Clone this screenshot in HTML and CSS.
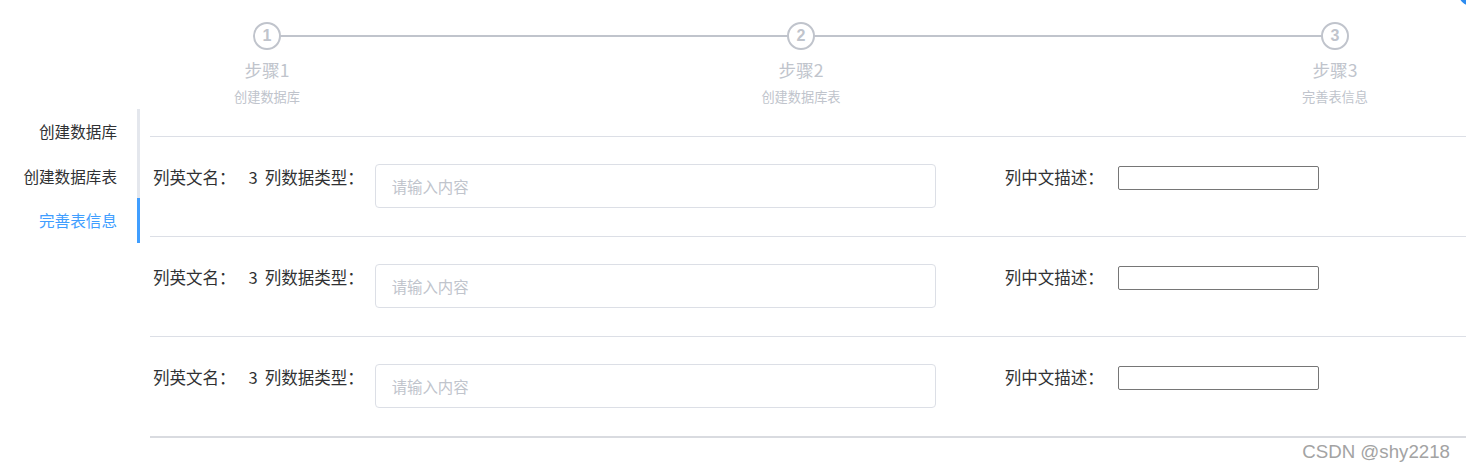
FILE: index.html
```html
<!DOCTYPE html>
<html lang="zh-CN">
<head>
<meta charset="utf-8">
<title>步骤</title>
<link rel="stylesheet" href="styles.css">
</head>
<body>
<div class="page">
  <div class="steps">
    <div class="step">
      <div class="step-head"><span class="step-line"></span><span class="step-icon">1</span></div>
      <div class="step-title">步骤1</div>
      <div class="step-desc">创建数据库</div>
    </div>
    <div class="step">
      <div class="step-head"><span class="step-line"></span><span class="step-icon">2</span></div>
      <div class="step-title">步骤2</div>
      <div class="step-desc">创建数据库表</div>
    </div>
    <div class="step">
      <div class="step-head"><span class="step-icon">3</span></div>
      <div class="step-title">步骤3</div>
      <div class="step-desc">完善表信息</div>
    </div>
  </div>

  <div class="main">
    <div class="tabs-nav">
      <div class="tab-item">创建数据库</div>
      <div class="tab-item">创建数据库表</div>
      <div class="tab-item active">完善表信息</div>
    </div>
    <div class="content">
      <div class="row">
        <span class="lbl">列英文名：</span><span class="val">3</span><span class="lbl">列数据类型：</span>
        <input class="el-input" type="text" placeholder="请输入内容">
        <span class="lbl lbl-desc">列中文描述：</span>
        <input class="native-input" type="text">
      </div>
      <div class="row">
        <span class="lbl">列英文名：</span><span class="val">3</span><span class="lbl">列数据类型：</span>
        <input class="el-input" type="text" placeholder="请输入内容">
        <span class="lbl lbl-desc">列中文描述：</span>
        <input class="native-input" type="text">
      </div>
      <div class="row last">
        <span class="lbl">列英文名：</span><span class="val">3</span><span class="lbl">列数据类型：</span>
        <input class="el-input" type="text" placeholder="请输入内容">
        <span class="lbl lbl-desc">列中文描述：</span>
        <input class="native-input" type="text">
      </div>
    </div>
  </div>

  <div class="watermark">CSDN @shy2218</div>
  <div class="fab"></div>
</div>
</body>
</html>
```
FILE: styles.css
```css
html, body {
  margin: 0;
  padding: 0;
  overflow: hidden;
  background: #fff;
}
body {
  font-family: "Noto Sans CJK SC", "Microsoft YaHei", sans-serif;
  width: 1466px;
  height: 471px;
}
.page {
  position: relative;
  width: 1466px;
  height: 471px;
  overflow: hidden;
}

/* steps */
.steps {
  display: flex;
  width: 1602px;
  padding-bottom: 5px;
}
.step {
  flex: 0 0 534px;
  text-align: center;
}
.step-head {
  position: relative;
  height: 28px;
  margin-top: 22px;
}
.step-line {
  position: absolute;
  top: 13px;
  left: 50%;
  right: -50%;
  height: 2px;
  background: #c0c4cc;
}
.step-icon {
  position: relative;
  z-index: 1;
  display: inline-flex;
  align-items: center;
  justify-content: center;
  box-sizing: border-box;
  width: 28px;
  height: 28px;
  border: 2px solid #c0c4cc;
  border-radius: 50%;
  background: #fff;
  color: #c0c4cc;
  font-family: "Liberation Sans", Arial, sans-serif;
  font-weight: bold;
  font-size: 16px;
}
.step-title {
  height: 40px;
  line-height: 40px;
  font-size: 17.6px;
  font-weight: normal;
  color: #c0c4cc;
}
.step-desc {
  height: 14px;
  line-height: 14px;
  font-size: 13.2px;
  color: #c0c4cc;
}

/* main */
.main {
  display: flex;
  align-items: flex-start;
}
.tabs-nav {
  width: 137px;
  border-right: 3px solid #e4e7ed;
}
.tab-item {
  position: relative;
  height: 44.67px;
  line-height: 44.67px;
  padding-right: 20px;
  text-align: right;
  font-size: 15.6px;
  color: #303133;
}
.tab-item.active {
  color: #409eff;
}
.tab-item.active::after {
  content: "";
  position: absolute;
  top: 0;
  bottom: 0;
  right: -3px;
  width: 3px;
  background: #409eff;
}

.content {
  flex: 1;
  margin-left: 10px;
  padding-top: 27px;
}
.row {
  display: flex;
  align-items: flex-start;
  height: 44px;
  padding: 27px 0 28px 3px;
  border-top: 1px solid #dcdfe6;
}
.row.last {
  border-bottom: 2px solid #d9dbe0;
}
.lbl {
  font-size: 16.5px;
  line-height: 26px;
  color: #303133;
  white-space: nowrap;
}
.val {
  font-size: 16.5px;
  line-height: 26px;
  color: #303133;
  margin: 0 7px 0 13px;
}
.el-input {
  box-sizing: border-box;
  width: 561px;
  height: 44px;
  margin: 0 0 0 11px;
  padding: 0 16px;
  border: 1px solid #dcdfe6;
  border-radius: 4px;
  font-family: inherit;
  font-size: 15.4px;
  color: #606266;
  outline: none;
}
.el-input::placeholder {
  color: #c0c4cc;
}
.lbl-desc {
  margin-left: 69px;
}
.native-input {
  box-sizing: border-box;
  width: 201px;
  height: 24px;
  margin: 2px 0 0 14px;
  padding: 1px 2px;
  border: 1px solid #767676;
  border-radius: 2px;
  outline: none;
}

.watermark {
  position: absolute;
  right: 16px;
  top: 441px;
  font-family: "Liberation Sans", Arial, sans-serif;
  font-size: 18.7px;
  color: #a3a3a3;
}
.fab {
  position: absolute;
  left: 1458px;
  top: -22px;
  width: 28px;
  height: 28px;
  border-radius: 50%;
  background: #2d8cf0;
}
```
